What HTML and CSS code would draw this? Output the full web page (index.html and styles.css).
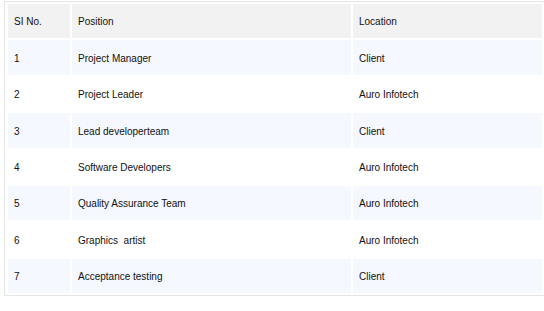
FILE: index.html
```html
<!DOCTYPE html>
<html>
<head>
<meta charset="utf-8">
<link rel="stylesheet" href="styles.css">
</head>
<body>
<div class="wrap">
<table class="team">
<thead>
<tr><th class="c1">SI No.</th><th class="c2">Position</th><th class="c3">Location</th></tr>
</thead>
<tbody>
<tr class="odd"><td>1</td><td>Project Manager</td><td>Client</td></tr>
<tr><td>2</td><td>Project Leader</td><td>Auro Infotech</td></tr>
<tr class="odd"><td>3</td><td>Lead developerteam</td><td>Client</td></tr>
<tr><td>4</td><td>Software Developers</td><td>Auro Infotech</td></tr>
<tr class="odd"><td>5</td><td>Quality Assurance Team</td><td>Auro Infotech</td></tr>
<tr><td>6</td><td>Graphics&nbsp; artist</td><td>Auro Infotech</td></tr>
<tr class="odd"><td>7</td><td>Acceptance testing</td><td>Client</td></tr>
</tbody>
</table>
</div>
</body>
</html>
```
FILE: styles.css
```css
html, body {
  margin: 0;
  padding: 0;
  background: #ffffff;
  overflow: hidden;
}
body {
  font-family: "Liberation Sans", Arial, sans-serif;
  font-size: 10px;
  color: #111;
}
.wrap {
  margin: 1px 0 0 4px;
  border: 1px solid #e4e4e4;
  border-right: 0;
  padding: 0 0 0 1px;
}
.team {
  border-collapse: separate;
  border-spacing: 2px;
  width: 100%;
  table-layout: fixed;
}
.team th, .team td {
  text-align: left;
  font-weight: normal;
  padding: 12.4px 6px 10px;
  line-height: 12px;
  vertical-align: middle;
}
.team th {
  background: #f2f2f2;
}
.c1 { width: 50px; }
.c2 { width: 267px; }
.team tr.odd td {
  background: #f5f8fe;
}
```
